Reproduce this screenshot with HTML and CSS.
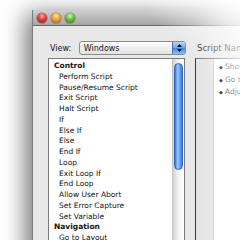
FILE: index.html
```html
<!DOCTYPE html>
<html lang="en">
<head>
    <meta charset="UTF-8">
    <title>Edit Script</title>
    <link rel="stylesheet" href="styles.css">
</head>
<body>

    <div class="window">
        <!-- Title bar with the three window buttons -->
        <div class="titlebar">
            <span class="light red"></span>
            <span class="light amber"></span>
            <span class="light green"></span>
        </div>

        <div class="content">
            <!-- Step list -->
            <div class="left-pane">
                <div class="view-row">
                    <label class="view-label">View:</label>
                    <div class="popup">
                        <span class="popup-text">Windows</span>
                        <span class="stepper">
                            <svg width="5" height="8" viewBox="0 0 5 8">
                                <path d="M2.5 0 L5 3 L0 3 Z M0 5 L5 5 L2.5 8 Z" fill="#111"/>
                            </svg>
                        </span>
                    </div>
                </div>
                <div class="list">
                    <ul class="steps">
                        <li class="group">Control</li>
                        <li>Perform Script</li>
                        <li>Pause/Resume Script</li>
                        <li>Exit Script</li>
                        <li>Halt Script</li>
                        <li>If</li>
                        <li>Else If</li>
                        <li>Else</li>
                        <li>End If</li>
                        <li>Loop</li>
                        <li>Exit Loop If</li>
                        <li>End Loop</li>
                        <li>Allow User Abort</li>
                        <li>Set Error Capture</li>
                        <li>Set Variable</li>
                        <li class="group">Navigation</li>
                        <li>Go to Layout</li>
                    </ul>
                    <div class="scrollbar"><div class="thumb"></div></div>
                </div>
            </div>

            <!-- Script lines -->
            <div class="right-pane">
                <div class="pane-label">Script Name</div>
                <div class="script-box">
                    <div class="gutter"></div>
                    <ul class="script-lines">
                        <li><span class="bullet">&#9670;</span>Show All Records</li>
                        <li><span class="bullet">&#9670;</span>Go to Layout</li>
                        <li><span class="bullet">&#9670;</span>Adjust Window</li>
                    </ul>
                </div>
            </div>
        </div>
    </div>

    <div class="fade"></div>

</body>
</html>
```
FILE: styles.css
```css
/* Base */
body {
    margin: 0;
    width: 240px;
    height: 240px;
    overflow: hidden;
    position: relative;
    background-color: #ffffff;
    font-family: "DejaVu Sans", sans-serif;
    color: #111;
}
ul {
    list-style: none;
    margin: 0;
    padding: 0;
}

/* Window */
.window {
    margin: 10px 0 0 32px;
    width: 240px;
    height: 260px;
    background-color: #e8e8e8;
    border-left: 1px solid #7d7d7d;
    box-shadow: -6px 4px 22px rgba(0, 0, 0, 0.55);
}
.titlebar {
    height: 15px;
    display: flex;
    align-items: center;
    gap: 4px;
    padding-left: 4px;
    background: linear-gradient(#cfcfcf, #a6a6a6);
    border-bottom: 1px solid #6c6c6c;
}
.light {
    width: 10px;
    height: 10px;
    border-radius: 50%;
    box-shadow: 0 0 0 0.5px rgba(0, 0, 0, 0.45);
}
.red {
    background: radial-gradient(circle at 50% 30%, #ffb0a8 0, #e3393a 45%, #9c1116 100%);
}
.amber {
    background: radial-gradient(circle at 50% 30%, #ffe7a8 0, #f1a02a 45%, #a8590b 100%);
}
.green {
    background: radial-gradient(circle at 50% 30%, #d4f5b3 0, #6bbb3b 45%, #2c7a12 100%);
}

/* Panes */
.content {
    display: flex;
    padding: 15px 0 0 15px;
}
.left-pane {
    width: 137px;
}
.view-row {
    display: flex;
    align-items: center;
    height: 14px;
    margin-bottom: 3px;
}
.view-label {
    width: 29px;
    padding-left: 2px;
    font-size: 8px;
}
.popup {
    width: 106px;
    height: 12px;
    display: flex;
    align-items: center;
    border: 1px solid #8c8c8c;
    border-radius: 3px;
    background: linear-gradient(#ffffff, #f0f0f0 50%, #e2e2e2);
    margin-right: -1px;
}
.popup-text {
    flex: 1;
    padding-left: 4px;
    font-size: 8px;
}
.stepper {
    width: 12px;
    height: 12px;
    display: flex;
    align-items: center;
    justify-content: center;
    border-left: 1px solid #4a74b8;
    border-radius: 0 2px 2px 0;
    background: linear-gradient(#b9d6fa, #6fa6ef 48%, #3f86e6 52%, #8cc0fa);
}

/* Step list */
.list {
    height: 190px;
    display: flex;
    border: 1px solid #7a7a7a;
    background-color: #ffffff;
}
.steps {
    flex: 1;
    padding: 2px 0 0 5px;
    font-size: 7.5px;
    line-height: 10.75px;
}
.steps li {
    padding-left: 5px;
    white-space: nowrap;
}
.steps .group {
    padding-left: 0;
    font-weight: bold;
}
.scrollbar {
    width: 11px;
    border-left: 1px solid #c4c4c4;
    background: linear-gradient(to right, #d2d2d2, #f2f2f2 45%, #ffffff);
}
.thumb {
    margin: 4px 1px 0 1px;
    height: 107px;
    border-radius: 5px;
    border: 1px solid #2f63c0;
    box-sizing: border-box;
    background: linear-gradient(to right, #3573d8, #9cc6f8 35%, #6ea8f2 65%, #3a7ade);
}

/* Script pane */
.right-pane {
    flex: 1;
    margin-left: 10px;
}
.pane-label {
    height: 14px;
    line-height: 14px;
    margin-bottom: 3px;
    padding-left: 2px;
    font-size: 8.5px;
    white-space: nowrap;
}
.script-box {
    height: 190px;
    display: flex;
    border-top: 1px solid #7a7a7a;
    border-left: 1px solid #3a3a3a;
    background-color: #ffffff;
}
.gutter {
    width: 17px;
    background-color: #e4e4e4;
    border-right: 1px solid #cfcfcf;
}
.script-lines {
    padding: 2px 0 0 5px;
    font-size: 7.5px;
    line-height: 11.5px;
    color: #333;
    white-space: nowrap;
}
.bullet {
    display: inline-block;
    width: 6px;
    font-size: 5px;
    color: #000;
}

/* Fade over the top right corner of the shot */
.fade {
    position: absolute;
    inset: 0;
    pointer-events: none;
    background:
        linear-gradient(225deg, rgba(255, 255, 255, 0.95) 0%, rgba(255, 255, 255, 0) 22%),
        linear-gradient(to right, rgba(255, 255, 255, 0) 82%, rgba(255, 255, 255, 0.45) 100%);
}
```
